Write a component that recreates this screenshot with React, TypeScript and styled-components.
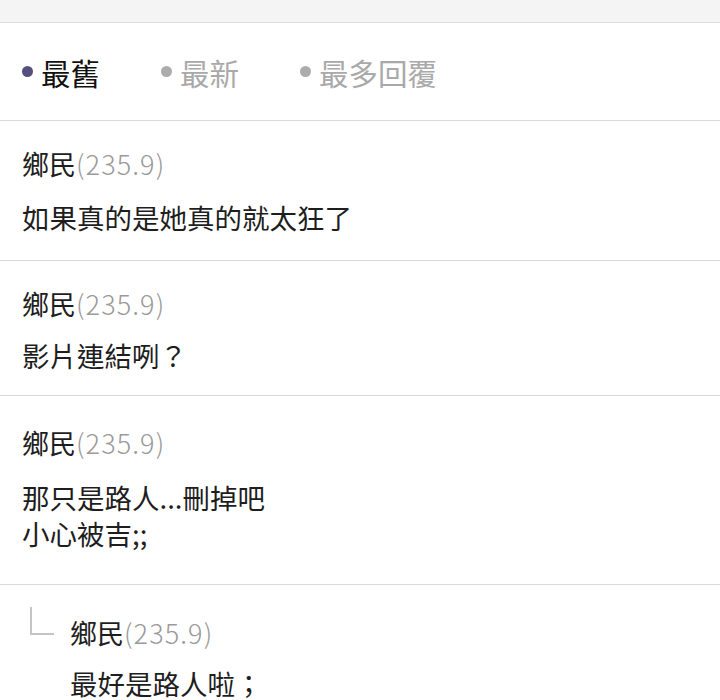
import React from "react";
import styled, { createGlobalStyle } from "styled-components";

const Global = createGlobalStyle`
  html, body { margin: 0; padding: 0; background: #ffffff; }
  body { font-family: "Noto Sans CJK TC", "Noto Sans", sans-serif; color: #1e1e1e; }
`;

const Page = styled.div`
  width: 720px;
  background: #fff;
`;

const TopBar = styled.div`
  height: 22px;
  background: #f4f4f4;
  border-bottom: 1px solid #dcdcdc;
`;

const Tabs = styled.div`
  height: 97px;
  display: flex;
  align-items: center;
  padding-left: 22px;
  gap: 61px;
  border-bottom: 1px solid #dadada;
`;

const Tab = styled.div<{ $active?: boolean }>`
  display: flex;
  align-items: center;
  gap: 8px;
  font-size: 29.5px;
  line-height: 36px;
  color: ${(p) => (p.$active ? "#111" : "#a9a9a9")};
`;

const Dot = styled.span<{ $active?: boolean }>`
  width: 11px;
  height: 11px;
  border-radius: 50%;
  background: ${(p) => (p.$active ? "#55507d" : "#acacac")};
`;

const Comment = styled.div<{ $top: number; $bottom: number }>`
  padding: ${(p) => p.$top}px 22px ${(p) => p.$bottom}px;
  border-bottom: 1px solid #dadada;
`;

const Name = styled.div`
  font-size: 27px;
  line-height: 36px;
  color: #1e1e1e;
`;

const Ip = styled.span`
  color: #9a9a9a;
  font-weight: 300;
  letter-spacing: 1.1px;
`;

const Body = styled.div<{ $gap: number }>`
  margin-top: ${(p) => p.$gap}px;
  font-size: 27.5px;
  line-height: 36px;
  color: #1e1e1e;
`;

const Reply = styled.div`
  display: flex;
  align-items: flex-start;
  padding: 30px 22px 0 30px;
`;

const Corner = styled.span`
  flex: none;
  width: 22px;
  height: 26px;
  margin-top: -8px;
  border-left: 2px solid #c4c4c4;
  border-bottom: 2px solid #c4c4c4;
`;

const ReplyContent = styled.div`
  margin-left: 16px;
`;

const comments = [
  { lines: ["如果真的是她真的就太狂了"], top: 25, gap: 17, bottom: 25 },
  { lines: ["影片連結咧？"], top: 25, gap: 15, bottom: 22 },
  { lines: ["那只是路人...刪掉吧", "小心被吉;;"], top: 29, gap: 18, bottom: 33 },
];

export default function App() {
  return (
    <Page>
      <Global />
      <TopBar />
      <Tabs>
        <Tab $active>
          <Dot $active />
          最舊
        </Tab>
        <Tab>
          <Dot />
          最新
        </Tab>
        <Tab>
          <Dot />
          最多回覆
        </Tab>
      </Tabs>
      {comments.map((c, i) => (
        <Comment key={i} $top={c.top} $bottom={c.bottom}>
          <Name>
            鄉民<Ip>(235.9)</Ip>
          </Name>
          <Body $gap={c.gap}>
            {c.lines.map((l, j) => (
              <div key={j}>{l}</div>
            ))}
          </Body>
        </Comment>
      ))}
      <Reply>
        <Corner />
        <ReplyContent>
          <Name>
            鄉民<Ip>(235.9)</Ip>
          </Name>
          <Body $gap={14}>最好是路人啦；</Body>
        </ReplyContent>
      </Reply>
    </Page>
  );
}
